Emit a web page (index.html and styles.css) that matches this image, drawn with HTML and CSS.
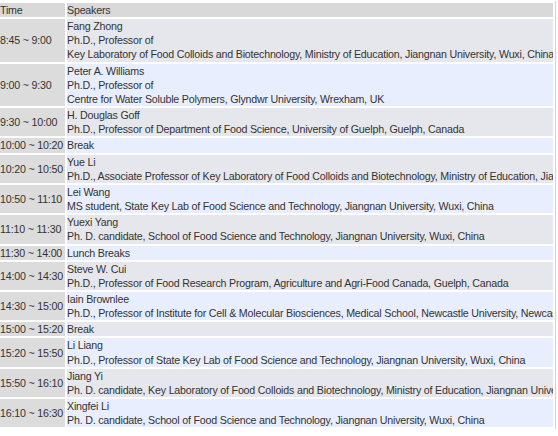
FILE: index.html
```html
<!DOCTYPE html>
<html>
<head>
<meta charset="utf-8">
<link rel="stylesheet" href="styles.css">
</head>
<body>
<div class="frame">
<table class="agenda">
<colgroup><col class="col-time"><col></colgroup>
<tr class="head"><th class="time">Time</th><th>Speakers</th></tr>
<tr class="odd"><td class="time">8:45 ~ 9:00</td><td>Fang Zhong<br>Ph.D., Professor of<br>Key Laboratory of Food Colloids and Biotechnology, Ministry of Education, Jiangnan University, Wuxi, China</td></tr>
<tr class="even"><td class="time">9:00 ~ 9:30</td><td>Peter A. Williams<br>Ph.D., Professor of<br>Centre for Water Soluble Polymers, Glyndwr University, Wrexham, UK</td></tr>
<tr class="odd"><td class="time">9:30 ~ 10:00</td><td>H. Douglas Goff<br>Ph.D., Professor of Department of Food Science, University of Guelph, Guelph, Canada</td></tr>
<tr class="even"><td class="time">10:00 ~ 10:20</td><td>Break</td></tr>
<tr class="odd"><td class="time">10:20 ~ 10:50</td><td>Yue Li<br>Ph.D., Associate Professor of Key Laboratory of Food Colloids and Biotechnology, Ministry of Education, Jiangnan University, Wuxi, China</td></tr>
<tr class="even"><td class="time">10:50 ~ 11:10</td><td>Lei Wang<br>MS student, State Key Lab of Food Science and Technology, Jiangnan University, Wuxi, China</td></tr>
<tr class="odd"><td class="time">11:10 ~ 11:30</td><td>Yuexi Yang<br>Ph. D. candidate, School of Food Science and Technology, Jiangnan University, Wuxi, China</td></tr>
<tr class="even"><td class="time">11:30 ~ 14:00</td><td>Lunch Breaks</td></tr>
<tr class="odd"><td class="time">14:00 ~ 14:30</td><td>Steve W. Cui<br>Ph.D., Professor of Food Research Program, Agriculture and Agri-Food Canada, Guelph, Canada</td></tr>
<tr class="even"><td class="time">14:30 ~ 15:00</td><td>Iain Brownlee<br>Ph.D., Professor of Institute for Cell &amp; Molecular Biosciences, Medical School, Newcastle University, Newcastle, UK</td></tr>
<tr class="odd"><td class="time">15:00 ~ 15:20</td><td>Break</td></tr>
<tr class="even"><td class="time">15:20 ~ 15:50</td><td>Li Liang<br>Ph.D., Professor of State Key Lab of Food Science and Technology, Jiangnan University, Wuxi, China</td></tr>
<tr class="odd"><td class="time">15:50 ~ 16:10</td><td>Jiang Yi<br>Ph. D. candidate, Key Laboratory of Food Colloids and Biotechnology, Ministry of Education, Jiangnan University, Wuxi, China</td></tr>
<tr class="even"><td class="time">16:10 ~ 16:30</td><td>Xingfei Li<br>Ph. D. candidate, School of Food Science and Technology, Jiangnan University, Wuxi, China</td></tr>
</table>
</div>
</body>
</html>
```
FILE: styles.css
```css
html, body {
  margin: 0;
  padding: 0;
  background: #ffffff;
}
.frame {
  width: 558px;
  overflow: hidden;
  padding-top: 1px;
}
.agenda {
  table-layout: fixed;
  width: 558px;
  border-collapse: separate;
  border-spacing: 2px;
  margin-left: -2px;
  border-right: 1px solid #d4d4d4;
  font-family: "Liberation Sans", Arial, sans-serif;
  font-size: 8pt;
  line-height: 14.15px;
  color: #333333;
  white-space: nowrap;
  letter-spacing: -0.2px;
}
.col-time {
  width: 65px;
}
.agenda th, .agenda td {
  padding: 0;
  text-align: left;
  font-weight: normal;
  overflow: hidden;
}
.agenda td {
  vertical-align: top;
}
.agenda .time {
  vertical-align: middle;
}
.head th {
  background: #d9d9d9;
}
.odd td {
  background: #e6e7ec;
}
.even td {
  background: #e8eefd;
}
.agenda td.time {
  background: #dcdcdc;
}
```
